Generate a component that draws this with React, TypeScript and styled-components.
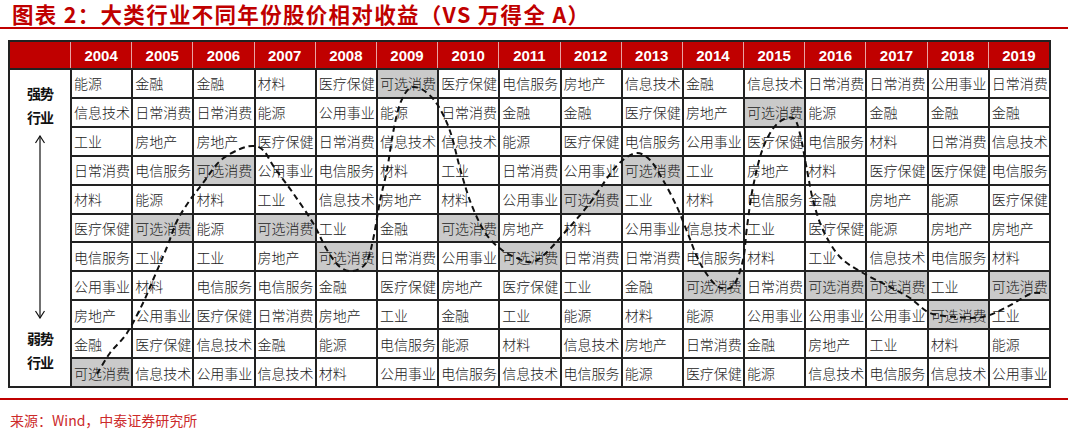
import React from "react";
import styled, { createGlobalStyle } from "styled-components";

const GlobalStyle = createGlobalStyle`
  html, body {
    margin: 0;
    padding: 0;
    background: #fff;
  }
  body {
    font-family: "Noto Sans CJK SC", "Liberation Sans", sans-serif;
  }
`;

const YEARS = [
  2004, 2005, 2006, 2007, 2008, 2009, 2010, 2011,
  2012, 2013, 2014, 2015, 2016, 2017, 2018, 2019,
];

// 每一行对应一个名次，从强到弱
const ROWS: string[][] = [
  ["能源", "金融", "金融", "材料", "医疗保健", "可选消费", "医疗保健", "电信服务", "房地产", "信息技术", "金融", "信息技术", "日常消费", "日常消费", "公用事业", "日常消费"],
  ["信息技术", "日常消费", "日常消费", "能源", "公用事业", "能源", "日常消费", "金融", "金融", "医疗保健", "房地产", "可选消费", "能源", "金融", "金融", "金融"],
  ["工业", "房地产", "房地产", "医疗保健", "日常消费", "信息技术", "信息技术", "能源", "医疗保健", "电信服务", "公用事业", "医疗保健", "电信服务", "材料", "日常消费", "信息技术"],
  ["日常消费", "电信服务", "可选消费", "公用事业", "电信服务", "材料", "工业", "日常消费", "公用事业", "可选消费", "工业", "房地产", "材料", "医疗保健", "医疗保健", "电信服务"],
  ["材料", "能源", "材料", "工业", "信息技术", "房地产", "材料", "公用事业", "可选消费", "工业", "材料", "电信服务", "金融", "房地产", "能源", "医疗保健"],
  ["医疗保健", "可选消费", "能源", "可选消费", "工业", "金融", "可选消费", "房地产", "材料", "公用事业", "信息技术", "工业", "医疗保健", "能源", "房地产", "房地产"],
  ["电信服务", "工业", "工业", "房地产", "可选消费", "日常消费", "公用事业", "可选消费", "日常消费", "日常消费", "电信服务", "材料", "工业", "信息技术", "电信服务", "材料"],
  ["公用事业", "材料", "电信服务", "电信服务", "金融", "医疗保健", "房地产", "医疗保健", "工业", "金融", "可选消费", "日常消费", "可选消费", "可选消费", "工业", "可选消费"],
  ["房地产", "公用事业", "医疗保健", "日常消费", "房地产", "工业", "金融", "工业", "能源", "材料", "能源", "公用事业", "公用事业", "公用事业", "可选消费", "工业"],
  ["金融", "医疗保健", "信息技术", "金融", "能源", "电信服务", "能源", "材料", "信息技术", "房地产", "日常消费", "金融", "房地产", "工业", "材料", "能源"],
  ["可选消费", "信息技术", "公用事业", "信息技术", "材料", "公用事业", "电信服务", "信息技术", "电信服务", "能源", "医疗保健", "能源", "信息技术", "电信服务", "信息技术", "公用事业"],
];

const HIGHLIGHT = "可选消费";

// 虚线轨迹（页面坐标）
const TRACK: [number, number][] = [
  [97, 374], [110, 353], [127, 333], [143, 303], [153, 280], [167, 247],
  [177, 221], [190, 200], [203, 183], [220, 161], [240, 149], [254, 146],
  [264, 151], [274, 167], [293, 193], [313, 223], [327, 250], [340, 267],
  [353, 271], [366, 263], [373, 240], [380, 201], [387, 170], [393, 133],
  [400, 104], [410, 88], [423, 90], [437, 104], [450, 131], [461, 172],
  [472, 206], [486, 234], [502, 250], [519, 259], [532, 262], [545, 254],
  [567, 230], [590, 203], [610, 174], [623, 160], [637, 153], [650, 160],
  [663, 180], [677, 207], [688, 234], [700, 263], [717, 286], [733, 286],
  [743, 260], [747, 227], [753, 187], [763, 148], [777, 124], [793, 118],
  [800, 134], [807, 170], [813, 200], [823, 230], [840, 257], [863, 273],
  [890, 287], [910, 298], [930, 313], [957, 317], [983, 317], [1007, 307],
  [1030, 294], [1042, 293],
];

const smoothPath = (pts: [number, number][]) => {
  let d = `M${pts[0][0]},${pts[0][1]}`;
  for (let i = 0; i < pts.length - 1; i++) {
    const p0 = pts[i - 1] || pts[i];
    const p1 = pts[i];
    const p2 = pts[i + 1];
    const p3 = pts[i + 2] || p2;
    const c1x = p1[0] + (p2[0] - p0[0]) / 6;
    const c1y = p1[1] + (p2[1] - p0[1]) / 6;
    const c2x = p2[0] - (p3[0] - p1[0]) / 6;
    const c2y = p2[1] - (p3[1] - p1[1]) / 6;
    d += ` C${c1x.toFixed(1)},${c1y.toFixed(1)} ${c2x.toFixed(1)},${c2y.toFixed(1)} ${p2[0]},${p2[1]}`;
  }
  return d;
};

const Page = styled.div`
  width: 1071px;
  height: 435px;
  display: flex;
  flex-direction: column;
  overflow: hidden;
`;

const Title = styled.h1`
  flex: none;
  margin: -2px 0 -2px 0;
  padding-left: 12px;
  font-family: "Noto Sans CJK SC", sans-serif;
  font-size: 21.5px;
  line-height: 31px;
  font-weight: 700;
  letter-spacing: 1.3px;
  color: #c00000;
  white-space: nowrap;
`;

const RedRule = styled.div<{ $gap: number }>`
  flex: none;
  height: 2px;
  margin-top: ${p => p.$gap}px;
  margin-right: 3px;
  background: #c00000;
`;

const Frame = styled.div`
  position: relative;
  flex: none;
  box-sizing: border-box;
  width: 1043px;
  height: 348px;
  margin: 11px 0 0 8px;
  border: 2px solid #222;
  display: grid;
  grid-template-columns: 60px repeat(16, minmax(0, 1fr));
  grid-template-rows: 26px repeat(11, minmax(0, 1fr));
`;

const HeadCell = styled.div<{ $first?: boolean }>`
  background: #c00000;
  color: #fff;
  border-left: ${p => (p.$first ? "none" : "1px solid #e9a3a3")};
  display: flex;
  align-items: center;
  justify-content: center;
  font-family: "Liberation Sans Narrow", "Liberation Sans", sans-serif;
  font-weight: 700;
  font-size: 15px;
`;

const SideCell = styled.div`
  grid-column: 1;
  grid-row: 2 / span 11;
  border-top: 2px solid #222;
  display: flex;
  flex-direction: column;
  align-items: center;
  padding-top: 11px;
`;

const SideLabel = styled.div<{ $gap?: number }>`
  margin-top: ${p => p.$gap || 0}px;
  font-family: "Noto Sans CJK SC", sans-serif;
  font-weight: 700;
  font-size: 14px;
  line-height: 24px;
  color: #111;
  text-align: center;
  letter-spacing: -1px;
`;

const ArrowMark = styled.svg`
  display: block;
  margin-top: 6px;
  width: 14px;
  height: 184px;
`;

const Cell = styled.div<{ $hot?: boolean }>`
  border-top: 2px solid #222;
  border-left: 2px solid #222;
  background: ${p => (p.$hot ? "#cacaca" : "#fff")};
  display: flex;
  align-items: center;
  padding-left: 2px;
  overflow: hidden;
  white-space: nowrap;
  font-family: "Noto Sans CJK SC", sans-serif;
  font-size: 14px;
  font-weight: 300;
  color: #222;
`;

const Track = styled.svg`
  position: absolute;
  left: -2px;
  top: -2px;
  width: 1043px;
  height: 348px;
  pointer-events: none;
  overflow: visible;
`;

const Source = styled.div`
  flex: none;
  margin-top: 10px;
  padding-left: 10px;
  line-height: 20px;
  font-family: "Noto Sans CJK SC", sans-serif;
  font-size: 14px;
  color: #cc2a2a;
`;

const App: React.FC = () => (
  <Page>
    <GlobalStyle />
    <Title>图表 2：大类行业不同年份股价相对收益（VS 万得全 A）</Title>
    <RedRule $gap={0} />
    <Frame>
      <HeadCell $first />
      {YEARS.map(y => (
        <HeadCell key={y}>{y}</HeadCell>
      ))}
      <SideCell>
        <SideLabel>
          强势
          <br />
          行业
        </SideLabel>
        <ArrowMark viewBox="0 0 14 184">
          <path d="M7 1 V183" stroke="#111" strokeWidth="1.2" fill="none" />
          <path d="M2.5 8 L7 1 L11.5 8" stroke="#111" strokeWidth="1.2" fill="none" />
          <path d="M2.5 176 L7 183 L11.5 176" stroke="#111" strokeWidth="1.2" fill="none" />
        </ArrowMark>
        <SideLabel $gap={7}>
          弱势
          <br />
          行业
        </SideLabel>
      </SideCell>
      {ROWS.map((row, r) =>
        row.map((name, c) => (
          <Cell
            key={`${r}-${c}`}
            $hot={name === HIGHLIGHT}
            style={{ gridRow: r + 2, gridColumn: c + 2 }}
          >
            {name}
          </Cell>
        ))
      )}
      <Track viewBox="8 40 1043 348">
        <path
          d={smoothPath(TRACK)}
          fill="none"
          stroke="#111"
          strokeWidth="2"
          strokeDasharray="6 4"
        />
      </Track>
    </Frame>
    <RedRule $gap={10} />
    <Source>来源：Wind，中泰证券研究所</Source>
  </Page>
);

export default App;
